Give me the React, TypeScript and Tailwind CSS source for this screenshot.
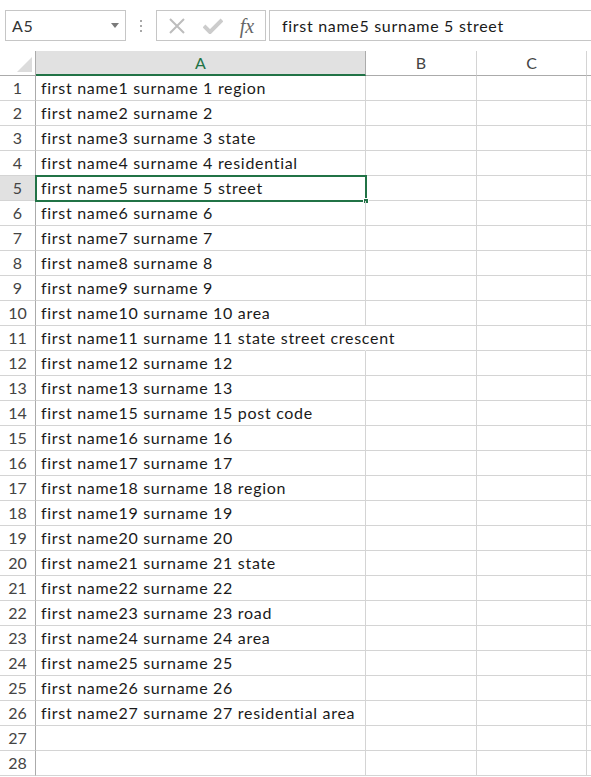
import React from "react";

const rows: string[] = [
  "first name1 surname 1 region",
  "first name2 surname 2",
  "first name3 surname 3 state",
  "first name4 surname 4 residential",
  "first name5 surname 5 street",
  "first name6 surname 6",
  "first name7 surname 7",
  "first name8 surname 8",
  "first name9 surname 9",
  "first name10 surname 10 area",
  "first name11 surname 11 state street crescent",
  "first name12 surname 12",
  "first name13 surname 13",
  "first name15 surname 15 post code",
  "first name16 surname 16",
  "first name17 surname 17",
  "first name18 surname 18 region",
  "first name19 surname 19",
  "first name20 surname 20",
  "first name21 surname 21 state",
  "first name22 surname 22",
  "first name23 surname 23 road",
  "first name24 surname 24 area",
  "first name25 surname 25",
  "first name26 surname 26",
  "first name27 surname 27 residential area",
  "",
  "",
];

export default function App() {
  return (
    <div
      className="w-[591px] h-[777px] bg-white overflow-hidden text-[#1a1a1a]"
      style={{ fontFamily: "Lato, 'Open Sans', sans-serif" }}
    >
      {/* Formula bar */}
      <div className="h-[51px] flex items-start pt-[10px]">
        <div className="ml-[5px] w-[121px] h-[31px] border border-[#c6c6c6] flex items-center justify-between pl-[6px] pr-[6px]">
          <span className="text-[16px] tracking-[0.6px] text-[#333]">A5</span>
          <svg width="8" height="5" viewBox="0 0 8 5">
            <polygon points="0,0 8,0 4,5" fill="#7a7a7a" />
          </svg>
        </div>
        <div className="w-[30px] h-[31px] flex items-center justify-center">
          <svg width="4" height="12" viewBox="0 0 4 12">
            <rect x="1" y="0" width="2" height="2" fill="#a8a8a8" />
            <rect x="1" y="5" width="2" height="2" fill="#a8a8a8" />
            <rect x="1" y="10" width="2" height="2" fill="#a8a8a8" />
          </svg>
        </div>
        <div className="w-[110px] h-[31px] border border-[#c6c6c6] flex items-center">
          <div className="w-[36px] flex justify-center ml-[2px]">
            <svg width="18" height="18" viewBox="0 0 18 18">
              <path d="M2 2 L16 16 M16 2 L2 16" stroke="#bdbdbd" strokeWidth="2" fill="none" />
            </svg>
          </div>
          <div className="w-[36px] flex justify-center">
            <svg width="20" height="16" viewBox="0 0 20 16">
              <path d="M1 8 L7 14 L19 2" stroke="#cccccc" strokeWidth="4" fill="none" />
            </svg>
          </div>
          <div className="w-[32px] flex justify-center">
            <span
              className="italic text-[20px] text-[#666] leading-none"
              style={{ fontFamily: "'Liberation Serif', 'DejaVu Serif', serif" }}
            >
              fx
            </span>
          </div>
        </div>
        <div className="ml-[3px] flex-1 h-[31px] border-y border-l border-[#c6c6c6] flex items-center pl-[12px]">
          <span className="text-[16px] tracking-[0.7px] text-[#1a1a1a]">first name5 surname 5 street</span>
        </div>
      </div>

      {/* Column header */}
      <div className="flex h-[25px]">
        <div className="w-[36px] h-[25px] border-r border-b border-[#ababab] flex items-end justify-end pr-[3px] pb-[3px] bg-white">
          <svg width="15" height="15" viewBox="0 0 15 15">
            <polygon points="15,0 15,15 0,15" fill="#dcdcdc" />
          </svg>
        </div>
        <div className="w-[330px] h-[25px] bg-[#e1e1e1] border-r border-[#ababab] border-b-2 border-b-[#217346] flex items-center justify-center text-[16px] text-[#217346]">
          A
        </div>
        <div className="w-[111px] h-[25px] border-r border-b border-[#d4d4d4] border-b-[#ababab] flex items-center justify-center text-[16px] text-[#444]">
          B
        </div>
        <div className="w-[110px] h-[25px] border-r border-b border-[#d4d4d4] border-b-[#ababab] flex items-center justify-center text-[16px] text-[#444]">
          C
        </div>
        <div className="flex-1 h-[25px] border-b border-[#ababab]" />
      </div>

      {/* Rows */}
      {rows.map((text, i) => {
        const selected = i === 4;
        const overflow = i === 10;
        return (
          <div key={i} className="flex h-[25px]">
            <div
              className={
                "w-[36px] h-[25px] border-r border-b border-r-[#ababab] border-b-[#d4d4d4] flex items-center justify-center text-[16px] text-[#444] " +
                (selected ? "bg-[#e1e1e1]" : "bg-white")
              }
            >
              {i + 1}
            </div>
            <div
              className={
                "relative w-[330px] h-[25px] border-b border-[#d4d4d4] flex items-center pl-[5px] whitespace-nowrap text-[16px] tracking-[0.7px] text-[#1a1a1a] " +
                (overflow ? "border-r border-r-transparent z-10" : "border-r")
              }
            >
              <span>{text}</span>
              {selected && (
                <div className="absolute -left-[1px] -top-[1px] w-[332px] h-[27px] border-2 border-[#217346]">
                  <div className="absolute -right-[4px] -bottom-[4px] w-[6px] h-[6px] bg-[#217346] border border-white" />
                </div>
              )}
            </div>
            <div className="w-[111px] h-[25px] border-r border-b border-[#d4d4d4]" />
            <div className="w-[110px] h-[25px] border-r border-b border-[#d4d4d4]" />
            <div className="flex-1 h-[25px] border-b border-[#d4d4d4]" />
          </div>
        );
      })}
    </div>
  );
}
